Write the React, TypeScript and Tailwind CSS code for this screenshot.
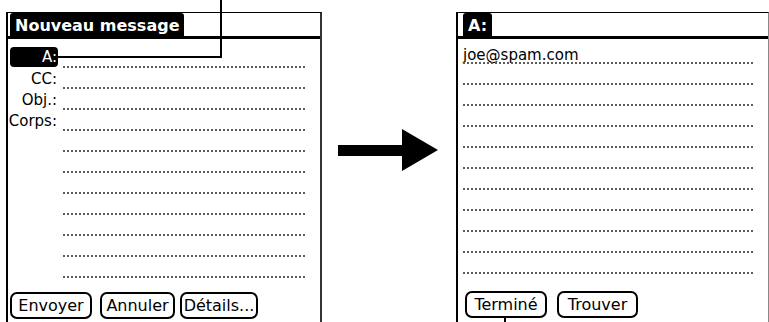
const dots =
  "h-[2px] bg-[image:repeating-linear-gradient(90deg,#5c5c5c_0px,#5c5c5c_2px,transparent_2px,transparent_4px)]";

function PalmButton({ label, w }: { label: string; w: string }) {
  return (
    <div
      className={`${w} h-[27px] border-2 border-black rounded-[7px] flex items-center justify-center text-[16px] leading-none`}
    >
      {label}
    </div>
  );
}

function LeftScreen() {
  const rows = [
    { label: "A:", hl: true },
    { label: "CC:" },
    { label: "Obj.:" },
    { label: "Corps:" },
    {}, {}, {}, {}, {}, {}, {},
  ] as { label?: string; hl?: boolean }[];

  return (
    <div className="ml-[6px] mt-[12px] w-[316px] h-[310px] border-l-2 border-l-black border-r-2 border-r-[#333] border-t border-t-black flex flex-col">
      <div className="flex h-[23px]">
        <div className="ml-[2px] bg-black text-white font-bold text-[16px] leading-[23px] pt-[1px] px-[5px] rounded-t-[3px]">
          Nouveau message
        </div>
      </div>
      <div className="h-[3px] bg-black" />
      <div className="pt-[8px] flex flex-col">
        {rows.map((r, i) => (
          <div key={i} className="flex h-[21px]">
            <div className="w-[50px] flex justify-end">
              {r.hl ? (
                <div className="ml-[2px] w-[48px] h-[20px] bg-black text-white rounded-[4px] text-right pr-[1px] text-[15px] leading-[21px]">
                  {r.label}
                </div>
              ) : (
                <span className="pr-[1px] text-[15px] leading-[22px]">{r.label}</span>
              )}
            </div>
            <div className="ml-[5px] w-[242px] flex flex-col justify-end">
              <div className={dots} />
            </div>
          </div>
        ))}
      </div>
      <div className="mt-[14px] flex">
        <div className="ml-[2px]">
          <PalmButton label="Envoyer" w="w-[82px]" />
        </div>
        <div className="ml-[8px]">
          <PalmButton label="Annuler" w="w-[75px]" />
        </div>
        <div className="ml-[5px]">
          <PalmButton label="Détails..." w="w-[78px]" />
        </div>
      </div>
    </div>
  );
}

function RightScreen() {
  return (
    <div className="mt-[12px] w-[313px] h-[310px] border-l-2 border-l-black border-r border-r-[#888] border-t border-t-black flex flex-col">
      <div className="flex h-[23px]">
        <div className="ml-[5px] bg-black text-white font-bold text-[16px] leading-[23px] pt-[1px] px-[5px] rounded-t-[3px]">
          A:
        </div>
      </div>
      <div className="h-[3px] bg-black" />
      <div className="pt-[4px] flex flex-col">
        {Array.from({ length: 11 }).map((_, i) => (
          <div key={i} className="ml-[5px] w-[290px] h-[21px] flex flex-col justify-end">
            {i === 0 && (
              <span className="text-[15px] leading-[17px] -mb-[2px]">joe@spam.com</span>
            )}
            <div className={dots} />
          </div>
        ))}
      </div>
      <div className="mt-[17px] flex">
        <div className="ml-[7px]">
          <PalmButton label="Terminé" w="w-[82px]" />
        </div>
        <div className="ml-[10px]">
          <PalmButton label="Trouver" w="w-[81px]" />
        </div>
      </div>
    </div>
  );
}

export default function App() {
  return (
    <div className="relative w-[769px] h-[322px] overflow-hidden bg-white flex items-start text-black font-['DejaVu_Sans',sans-serif]">
      <LeftScreen />
      <div className="w-[134px] pt-[129px] pl-[16px]">
        <svg width="100" height="42" viewBox="0 0 100 42">
          <polygon points="0,16 64,16 64,0 100,21 64,42 64,27 0,27" fill="#000" />
        </svg>
      </div>
      <RightScreen />

      {/* callout lines */}
      <div className="absolute left-[220px] top-0 w-[2px] h-[58px] bg-black" />
      <div className="absolute left-[58px] top-[56px] w-[164px] h-[2px] bg-black" />
      <div className="absolute left-[504px] top-[318px] w-[2px] h-[4px] bg-black" />
    </div>
  );
}
